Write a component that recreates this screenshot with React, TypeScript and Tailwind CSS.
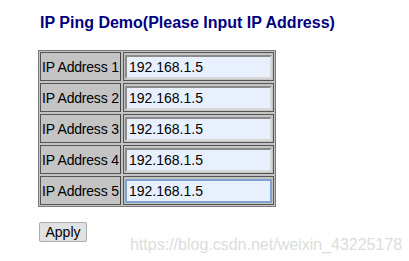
const rows = [1, 2, 3, 4, 5];

export default function App() {
  return (
    <div className="relative h-[261px] w-[409px] bg-white font-['Liberation_Sans',Arial,sans-serif] text-black">
      <div className="pl-[40px] pt-[13px]">
        <h1 className="text-[16px] font-bold leading-[19px] text-[#000080]">
          IP Ping Demo(Please Input IP Address)
        </h1>
      </div>

      <div className="ml-[38px] mt-[18px] w-fit border border-[#7a7a7a] bg-[#c4c4c4] p-px">
        <div className="grid grid-cols-[81px_151px] gap-[2px]">
          {rows.map((n) => (
            <div key={n} className="contents">
              <div className="flex h-[29px] items-center overflow-hidden whitespace-nowrap border border-[#555] border-r-[#444] pl-px text-[14px] leading-none tracking-[-0.2px]">
                IP Address {n}
              </div>
              <div className="flex h-[29px] items-center border border-[#555] p-px">
                <input
                  defaultValue="192.168.1.5"
                  className={
                    n === 5
                      ? "h-[24px] w-full border-2 border-[#7da2ce] bg-[#e8f0fe] pl-[2px] text-[14px] outline-none"
                      : "h-[24px] w-full border-2 border-t-[#8a8a8a] border-l-[#8a8a8a] border-r-[#d8d8d8] border-b-[#d8d8d8] bg-[#e8f0fe] pl-[2px] text-[14px] outline-none"
                  }
                />
              </div>
            </div>
          ))}
        </div>
      </div>

      <div className="ml-[39px] mt-[13px]">
        <button className="h-[20px] w-[48px] rounded-[2px] border border-[#adadad] bg-[#e1e1e1] text-[14px] leading-none">
          Apply
        </button>
      </div>

      <div className="pointer-events-none absolute left-[130px] top-[233px] text-[16px] text-[#dcdcdc]">
        https://blog.csdn.net/weixin_43225178
      </div>
    </div>
  );
}
